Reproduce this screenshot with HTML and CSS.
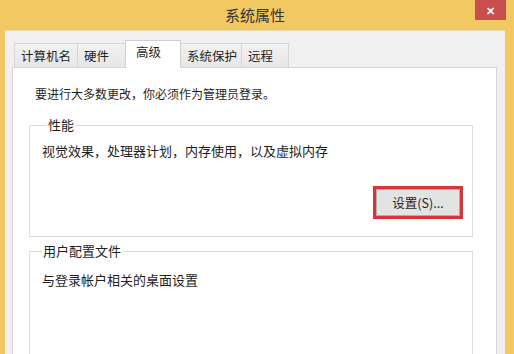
FILE: index.html
```html
<!DOCTYPE html>
<html lang="zh-CN">
<head>
    <meta charset="UTF-8">
    <meta name="viewport" content="width=device-width, initial-scale=1.0">
    <title>系统属性</title>
    <link rel="stylesheet" href="styles.css">
</head>
<body>
    <div class="window">
        <div class="titlebar">
            <span></span>
            <div class="title">系统属性</div>
            <div class="close">&#x2715;</div>
        </div>
        <div class="client">
            <div class="tabs">
                <div class="tab">计算机名</div>
                <div class="tab">硬件</div>
                <div class="tab active">高级</div>
                <div class="tab">系统保护</div>
                <div class="tab">远程</div>
            </div>
            <div class="panel">
                <p class="notice">要进行大多数更改，你必须作为管理员登录。</p>

                <fieldset class="group perf">
                    <legend>性能</legend>
                    <p>视觉效果，处理器计划，内存使用，以及虚拟内存</p>
                    <div class="actions">
                        <span class="highlight"><button>设置(S)...</button></span>
                    </div>
                </fieldset>

                <fieldset class="group profile">
                    <legend>用户配置文件</legend>
                    <p>与登录帐户相关的桌面设置</p>
                </fieldset>
            </div>
        </div>
    </div>
</body>
</html>
```

FILE: styles.css
```css
html, body {
    margin: 0;
    padding: 0;
}
body {
    width: 514px;
    height: 354px;
    overflow: hidden;
    font-family: "Noto Sans CJK SC", "Noto Sans", sans-serif;
    color: #1e1e1e;
}
.window {
    height: 354px;
    background-color: #f1c862;
    padding: 0 9px 0 5px;
    display: flex;
    flex-direction: column;
}
.titlebar {
    height: 30px;
    display: grid;
    grid-template-columns: 1fr auto 1fr;
    align-items: start;
}
.title {
    font-size: 15px;
    line-height: 30px;
    color: #333;
}
.close {
    justify-self: end;
    margin-right: -1px;
    width: 31px;
    height: 20px;
    background-color: #c94f4f;
    color: #fff;
    font-size: 11px;
    font-weight: bold;
    line-height: 20px;
    text-align: center;
}
.client {
    flex: 1;
    background-color: #f0f0f0;
    border-top: 1px solid #e9dcb0;
    padding: 9px 8px 0 7px;
    display: flex;
    flex-direction: column;
}
.tabs {
    display: flex;
    align-items: flex-end;
    height: 27px;
    padding-left: 2px;
}
.tab {
    box-sizing: border-box;
    height: 24px;
    padding: 0 0 0 6px;
    white-space: nowrap;
    font-size: 12.5px;
    line-height: 23px;
    background: linear-gradient(#f2f2f2, #e6e6e6);
    border: 1px solid #d6d6d6;
    border-bottom: none;
    margin-right: -1px;
}
.tab:nth-child(1) { width: 64px; }
.tab:nth-child(2) { width: 49px; }
.tab:nth-child(4) { width: 62px; }
.tab:nth-child(5) { width: 48px; }
.tab.active {
    height: 28px;
    width: 56px;
    padding-left: 10px;
    line-height: 22px;
    background: #fff;
    position: relative;
    z-index: 1;
    margin-bottom: -1px;
    border-color: #d0d0d0;
}
.panel {
    flex: 1;
    background-color: #fff;
    border: 1px solid #d6d6d6;
    border-bottom: none;
    padding: 17px 23px 0 16px;
}
.notice {
    margin: 0 0 13px 6px;
    font-size: 12px;
    line-height: 18px;
}
.group {
    margin: 0;
    border: 1px solid #dcdcdc;
    padding: 0 9px 0 12px;
}
.group legend {
    font-size: 13px;
    line-height: 18px;
    padding: 0 1px;
    margin-left: 5px;
}
.group p {
    margin: 8px 0 0 0;
    font-size: 13px;
    line-height: 18px;
}
.perf {
    height: 119px;
    margin-bottom: 5px;
}
.profile {
    height: 120px;
}
.profile legend {
    margin-left: 0;
}
.profile p {
    margin-top: 11px;
}
.actions {
    display: flex;
    justify-content: flex-end;
    margin-top: 26px;
}
.highlight {
    border: 3px solid #d8343c;
    display: flex;
}
button {
    width: 84px;
    height: 27px;
    font-family: "Noto Sans CJK SC", "Noto Sans", sans-serif;
    font-size: 12.5px;
    color: #1e1e1e;
    background-color: #e3e3e3;
    border: 1px solid #adadad;
    padding: 0;
}
```
